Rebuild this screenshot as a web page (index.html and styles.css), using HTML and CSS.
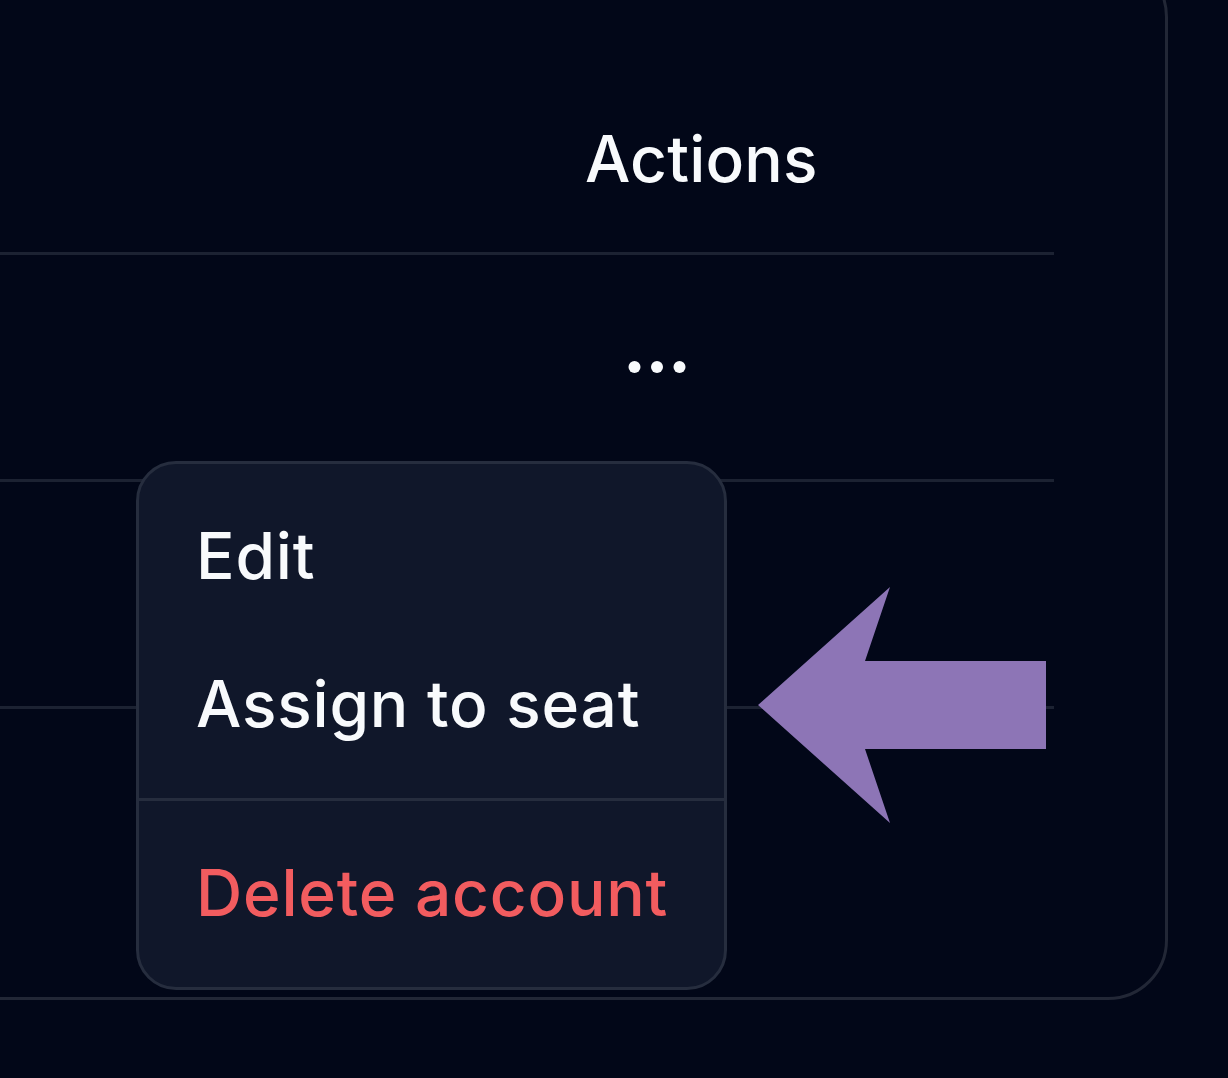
FILE: index.html
```html
<!DOCTYPE html>
<html lang="en">
<head>
<meta charset="utf-8">
<title>Actions menu</title>
<link rel="stylesheet" href="styles.css">
</head>
<body>
  <div class="card">
    <div class="table">
      <div class="row head">
        <div class="cell main"></div>
        <div class="cell actions"><span class="th">Actions</span></div>
      </div>
      <div class="row">
        <div class="cell main"></div>
        <div class="cell actions">
          <button class="dots" aria-label="More actions">
            <svg width="58" height="14" viewBox="0 0 58 14"><circle cx="6.5" cy="7" r="6" fill="#f8fafc"/><circle cx="29" cy="7" r="6" fill="#f8fafc"/><circle cx="51.5" cy="7" r="6" fill="#f8fafc"/></svg>
          </button>
        </div>
      </div>
      <div class="row">
        <div class="cell main"></div>
        <div class="cell actions"></div>
      </div>
      <div class="row last">
        <div class="cell main"></div>
        <div class="cell actions"></div>
      </div>
    </div>
  </div>

  <div class="menu" role="menu">
    <div class="group">
      <div class="item">Edit</div>
      <div class="item">Assign to seat</div>
    </div>
    <div class="group">
      <div class="item danger">Delete account</div>
    </div>
  </div>

  <svg class="arrow" width="290" height="238" viewBox="758 586 290 238" aria-hidden="true">
    <polygon points="758,705 890,587 865,661 1046,661 1046,749 865,749 890,823" fill="#8d75b6"/>
  </svg>
</body>
</html>
```

FILE: styles.css
```css
html, body {
  margin: 0;
  padding: 0;
}

body {
  position: relative;
  width: 1228px;
  height: 1078px;
  overflow: hidden;
  background: #020718;
  font-family: "Inter", "Lato", "Liberation Sans", sans-serif;
  font-weight: 500;
  color: #f8fafc;
}

.card {
  box-sizing: border-box;
  width: 1268px;
  margin: -43px 0 0 -100px;
  padding: 0 111px 64px 0;
  border: 3px solid #222736;
  border-radius: 60px;
}

.table {
  display: flex;
  flex-direction: column;
}

.row {
  display: grid;
  grid-template-columns: 1fr 469px;
  height: 224px;
  border-bottom: 3px solid #1c2232;
}

.row.head {
  height: 292px;
}

.row.last {
  border-bottom: none;
}

.cell {
  display: flex;
  align-items: center;
}

.head .cell {
  align-items: flex-end;
  padding-bottom: 53px;
}

.th {
  font-size: 64px;
  line-height: 80px;
  letter-spacing: 0.2px;
}

.dots {
  display: flex;
  align-items: center;
  margin: 0 0 0 43px;
  padding: 0;
  border: 0;
  background: none;
  cursor: pointer;
}

.dots svg {
  display: block;
}

.menu {
  position: absolute;
  left: 136px;
  top: 461px;
  box-sizing: border-box;
  width: 591px;
  height: 529px;
  background: #10172a;
  border: 3px solid #262d3e;
  border-radius: 40px;
  overflow: hidden;
}

.group {
  padding: 17px 0 21px;
}

.group + .group {
  border-top: 3px solid #262d3e;
}

.item {
  display: flex;
  align-items: center;
  height: 148px;
  padding-left: 57px;
  font-size: 64px;
  letter-spacing: 0.8px;
  color: #f8fafc;
  white-space: nowrap;
}

.item.danger {
  color: #f25c5f;
}

.arrow {
  position: absolute;
  left: 758px;
  top: 586px;
  display: block;
}
```
